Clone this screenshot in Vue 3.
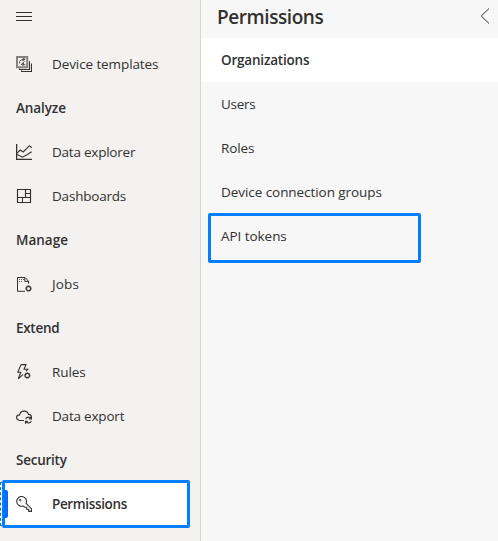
<script setup>
const nav = [
  { label: 'Device templates', icon: 'templates', ls: -0.1 },
  { label: 'Analyze', heading: true, ls: -0.1 },
  { label: 'Data explorer', icon: 'chart', ls: -0.23 },
  { label: 'Dashboards', icon: 'dashboard', ls: -0.2 },
  { label: 'Manage', heading: true, ls: 0 },
  { label: 'Jobs', icon: 'jobs', ls: 0.15 },
  { label: 'Extend', heading: true, ls: -0.3 },
  { label: 'Rules', icon: 'rules', ls: -0.1 },
  { label: 'Data export', icon: 'cloud', ls: -0.2 },
  { label: 'Security', heading: true, ls: -0.25 },
  { label: 'Permissions', icon: 'key', active: true, ls: -0.36 },
]
const sections = [
  { label: 'Organizations', active: true, ls: -0.2 },
  { label: 'Users', ls: -0.3 },
  { label: 'Roles', ls: -0.1 },
  { label: 'Device connection groups', ls: -0.06 },
  { label: 'API tokens', marked: true, ls: -0.05 },
]
</script>

<template>
  <div class="app">
    <nav class="sidebar">
      <button class="menu" aria-label="Menu">
        <svg width="16" height="10" viewBox="0 0 16 10"><path d="M0 .5h16M0 4.5h16M0 8.5h16" /></svg>
      </button>
      <div v-for="item in nav" :key="item.label" class="row" :class="{ heading: item.heading, active: item.active }">
        <svg v-if="item.icon" class="icon" width="16" height="16" viewBox="0 0 16 16">
          <g v-if="item.icon === 'templates'">
            <path d="M1 1h10.2v10.2H1z" stroke="#85827f" stroke-width="2" />
            <path d="M3.5 7.5V5.5L5 4h2L9 2.5M5.5 9l3-3.8M9.5 8.8H7" stroke-width=".8" />
            <circle cx="7.5" cy="3.4" r=".9" stroke-width=".8" /><circle cx="6.8" cy="8.2" r="1" stroke-width=".8" />
            <path d="M3.5 12.5v1h10V5.2M5.5 14.5v1h10V7.5" stroke-width="1.1" />
          </g>
          <g v-else-if="item.icon === 'chart'">
            <path d="M.6 0v15.4H16" stroke-width="1.3" />
            <path d="M1 9.2 4.2 6l3 2L13.5 1.7 15.7 3.8M1 10.5l5.5 2.7 4-2.2 5.2-3.2" stroke-width="1.15" />
          </g>
          <g v-else-if="item.icon === 'dashboard'">
            <path d="M1.5 1.5h13v13h-13zM9.5 1.5v8M1.5 9.5h13" stroke-width="1.15" />
            <path d="M9.5 5.5h5M6.5 9.5v5" />
          </g>
          <g v-else-if="item.icon === 'jobs'">
            <path d="M9 15.3H1.5V1.5h7.5l3.5 3.7v2.5M8.8 1.5v3.9h3.7" />
            <path d="M3 3.5h5M3 5.5h4" stroke-dasharray="1 1" stroke-width=".8" />
            <circle cx="12.5" cy="12.5" r="2.1" stroke-width="1.1" /><circle cx="12.5" cy="12.5" r="2.9" stroke-width=".8" stroke-dasharray="1.1 1.1" />
          </g>
          <g v-else-if="item.icon === 'rules'">
            <path d="M5 .6h5L8 5.3h3.8L10 7.2M5 .6 1.8 8.2h3L2.3 14.8 7 10.4" stroke-width="1.1" />
            <circle cx="11.3" cy="11.5" r="2.1" stroke-width="1.1" /><circle cx="11.3" cy="11.5" r="2.9" stroke-width=".8" stroke-dasharray="1.1 1.1" />
          </g>
          <g v-else-if="item.icon === 'cloud'">
            <path d="M8 12.5H3.6C-.5 12-.4 7 3.6 6.9 4.4 2.3 11.3 1.7 12.4 6.4c1.8 0 3 .7 3.1 2.6" stroke-width="1.1" />
            <path d="M9.6 11.2c.7-2.6 4.4-2.8 5.8-.6M15.5 8.4v2.5h-2.6M15.4 12.8c-.7 2.5-4.3 2.8-5.8.6M9.5 15.8v-2.5h2.6" stroke-width="1.1" />
          </g>
          <g v-else>
            <path d="M10.1 7.3A4.9 4.9 0 1 0 7.2 10l1.5 1.2h2v2h2v2.2h2.8V12.7z" stroke-width="1.1" />
            <circle cx="4.3" cy="4.1" r=".8" />
          </g>
        </svg>
        <span class="label" :style="{ letterSpacing: item.ls + 'px' }">{{ item.label }}</span>
      </div>
    </nav>
    <main class="panel">
      <header class="title">
        <h1>Permissions</h1>
        <svg width="10" height="16" viewBox="0 0 10 16"><path d="M9 .5 1.2 8 9 15.5" /></svg>
      </header>
      <div v-for="item in sections" :key="item.label" class="section" :class="{ active: item.active, marked: item.marked }">
        <span :style="{ letterSpacing: item.ls + 'px' }">{{ item.label }}</span>
      </div>
    </main>
  </div>
</template>

<style>
body { margin: 0; overflow: hidden; }
</style>
<style scoped>
.app {
  display: flex;
  width: 498px;
  height: 541px;
  overflow: hidden;
  color: #323130;
  font: 13.5px/20px "Open Sans", "Noto Sans", sans-serif;
  background: #f7f7f7;
}
.sidebar {
  box-sizing: border-box;
  width: 201px;
  flex: none;
  background: #f3f2f1;
  border-right: 1px solid #d6d5d4;
}
svg { display: block; fill: none; stroke: #323130; stroke-width: 1; flex: none; }
.menu { display: block; height: 42px; padding: 0 0 8px 16px; margin: 0; border: 0; background: none; }
.row { position: relative; display: flex; align-items: center; height: 44px; padding-left: 16px; box-sizing: border-box; white-space: nowrap; }
.icon { margin-right: 20px; }
.heading, .active { font-weight: 600; }
.row.active { border: 1px dashed #0078d4; padding-left: 15px; width: 188px; background: #fff; }
.row.active::before {
  content: "";
  position: absolute;
  left: 1px;
  top: -3px;
  width: 182px;
  height: 42px;
  border: 3px solid #0080ff;
  border-radius: 2px;
}
.row.active::after {
  content: "";
  position: absolute;
  left: 3px;
  top: 7px;
  width: 4px;
  height: 28px;
  border-radius: 0 2px 2px 0;
  background: #006cff;
}
.title { display: flex; justify-content: space-between; align-items: flex-start; box-sizing: border-box; height: 38px; padding: 8px 8px 0 16px; }
h1 { margin: -4px 0 0; font-size: 19px; line-height: 26px; font-weight: 600; letter-spacing: -0.42px; }
.panel { flex: 1; min-width: 0; }
.section { position: relative; display: flex; align-items: center; height: 44px; padding-left: 20px; white-space: nowrap; }
.section.active { background: #fff; }
.marked::after {
  content: "";
  position: absolute;
  left: 7px;
  top: -1px;
  width: 207px;
  height: 44px;
  border: 3px solid #0080ff;
  border-radius: 2px;
}
</style>
